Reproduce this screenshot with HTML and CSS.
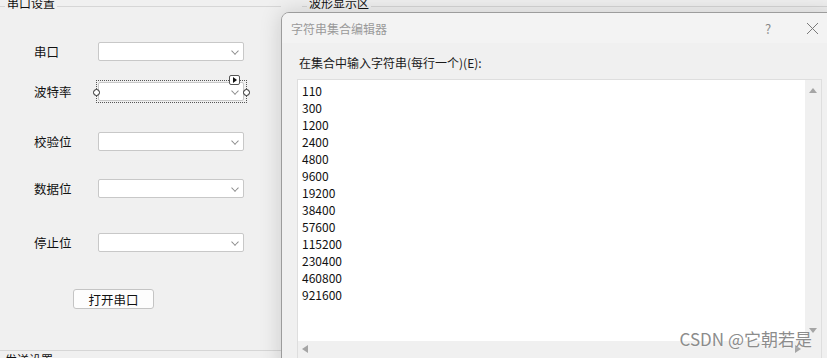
FILE: index.html
```html
<!DOCTYPE html>
<html lang="zh-CN">
<head>
  <meta charset="UTF-8" />
  <title>串口助手 - 设计器</title>
  <link rel="stylesheet" href="styles.css">
</head>
<body>
  <!-- Form designer surface -->
  <div class="form-surface">
    <section class="port-group">
      <div class="group-title"><span>串口设置</span></div>

      <div class="field-row row-port">
        <label>串口</label>
        <div class="combo"><span class="chevron"></span></div>
      </div>

      <div class="field-row row-baud">
        <label>波特率</label>
        <div class="combo is-selected">
          <span class="chevron"></span>
          <span class="sel-frame"></span>
          <span class="sel-handle left"></span>
          <span class="sel-handle right"></span>
          <span class="smart-tag"></span>
        </div>
      </div>

      <div class="field-row row-parity">
        <label>校验位</label>
        <div class="combo"><span class="chevron"></span></div>
      </div>

      <div class="field-row row-data">
        <label>数据位</label>
        <div class="combo"><span class="chevron"></span></div>
      </div>

      <div class="field-row row-stop">
        <label>停止位</label>
        <div class="combo"><span class="chevron"></span></div>
      </div>

      <div class="button-row">
        <button class="win-btn">打开串口</button>
      </div>
    </section>

    <section class="wave-group">
      <div class="group-title"><span>波形显示区</span></div>
    </section>

    <div class="send-title">发送设置</div>
  </div>

  <!-- String collection editor dialog -->
  <div class="dialog">
    <div class="dialog-titlebar">
      <span class="dialog-title">字符串集合编辑器</span>
      <span class="title-btn">?</span>
      <span class="title-btn close">
        <svg width="13" height="13" viewBox="0 0 13 13"><path d="M1 1 L12 12 M12 1 L1 12" stroke="#7a7a7a" stroke-width="1" fill="none"/></svg>
      </span>
    </div>

    <div class="dialog-body">
      <p class="prompt">在集合中输入字符串(每行一个)(E):</p>
      <div class="list-box">
        <div class="list-text">
          <div>110</div>
          <div>300</div>
          <div>1200</div>
          <div>2400</div>
          <div>4800</div>
          <div>9600</div>
          <div>19200</div>
          <div>38400</div>
          <div>57600</div>
          <div>115200</div>
          <div>230400</div>
          <div>460800</div>
          <div>921600</div>
        </div>
        <div class="vscroll">
          <span class="arrow up"></span>
          <span class="arrow down"></span>
        </div>
        <div class="hscroll">
          <span class="arrow left"></span>
          <span class="arrow right"></span>
        </div>
        <div class="corner"></div>
      </div>
    </div>
  </div>

  <div class="watermark">CSDN @它朝若是</div>
</body>
</html>
```

FILE: styles.css
```css
* {
  margin: 0;
  padding: 0;
  box-sizing: border-box;
  font-family: "Noto Sans CJK SC", "Noto Sans", sans-serif;
}

body {
  width: 827px;
  height: 358px;
  overflow: hidden;
  position: relative;
  background-color: #f0f0f0;
  color: #111;
  font-size: 12px;
}

.form-surface {
  display: flex;
  height: 358px;
  position: relative;
}

/* group boxes */
.port-group {
  width: 281px;
  height: 351px;
  border-bottom: 1px solid #d6d6d6;
  flex-shrink: 0;
}

.group-title {
  display: flex;
  gap: 2px;
  height: 12px;
  margin-top: -3px;
  line-height: 12px;
  white-space: nowrap;
}

.group-title::before,
.group-title::after {
  content: '';
  height: 1px;
  margin-top: 9px;
  background-color: #d6d6d6;
}

.group-title::before {
  width: 5px;
}

.group-title::after {
  flex: 1;
}

.wave-group {
  flex: 1;
  margin-left: 21px;
}

.send-title {
  position: absolute;
  left: 5px;
  top: 354px;
  line-height: 12px;
}

/* fields */
.field-row {
  display: flex;
  align-items: center;
  padding-left: 34px;
  height: 19px;
}

.field-row label {
  width: 64px;
  line-height: 19px;
  font-size: 12.5px;
}

.row-port { margin-top: 33px; }
.row-baud { margin-top: 21px; }
.row-parity { margin-top: 31px; }
.row-data { margin-top: 28px; }
.row-stop { margin-top: 35px; }

.combo {
  position: relative;
  width: 146px;
  height: 19px;
  background-color: #fff;
  border: 1px solid #c8c8c8;
  border-radius: 2px;
}

.chevron {
  position: absolute;
  right: 5px;
  top: 6px;
  width: 6px;
  height: 6px;
  border-right: 1px solid #8a8a8a;
  border-bottom: 1px solid #8a8a8a;
  transform: translateY(-1px) rotate(45deg) scale(0.9, 0.9);
}

/* designer selection */
.sel-frame {
  position: absolute;
  left: -3px;
  right: -4px;
  top: -3px;
  bottom: -3px;
  border: 1px dotted #555;
}

.sel-handle {
  position: absolute;
  top: 6px;
  width: 7px;
  height: 7px;
  border: 1px solid #222;
  border-radius: 50%;
  background-color: #fff;
}

.sel-handle.left { left: -6px; }
.sel-handle.right { right: -7px; }

.smart-tag {
  position: absolute;
  right: 3px;
  top: -8px;
  width: 11px;
  height: 10px;
  border: 1px solid #555;
  border-radius: 2px;
  background-color: #fff;
}

.smart-tag::after {
  content: '';
  position: absolute;
  left: 3px;
  top: 1px;
  border-left: 4px solid #111;
  border-top: 3px solid transparent;
  border-bottom: 3px solid transparent;
}

.button-row {
  margin-top: 37px;
  padding-left: 73px;
}

.win-btn {
  width: 81px;
  height: 20px;
  background-color: #fdfdfd;
  border: 1px solid #c4c4c4;
  border-radius: 3px;
  font-size: 12.5px;
  color: #111;
}

/* dialog */
.dialog {
  position: absolute;
  left: 281px;
  top: 12px;
  width: 554px;
  height: 360px;
  background-color: #f0f0f0;
  border: 1px solid #9c9c9c;
  border-radius: 8px 0 0 0;
  box-shadow: 0 0 22px rgba(0, 0, 0, 0.16);
  overflow: hidden;
}

.dialog-titlebar {
  display: flex;
  align-items: center;
  height: 30px;
  padding-left: 9px;
  background-color: #f3f3f3;
}

.dialog-title {
  flex: 1;
  color: #9a9a9a;
}

.title-btn {
  width: 44px;
  display: flex;
  justify-content: center;
  align-items: center;
  color: #888;
  font-size: 13px;
}

.dialog-body {
  padding: 12px 0 0 15px;
}

.prompt {
  line-height: 16px;
  padding-left: 2px;
  color: #1a1a1a;
}

.list-box {
  margin-top: 8px;
  width: 525px;
  height: 280px;
  border: 1px solid #dedede;
  display: grid;
  grid-template-columns: 1fr 16px;
  grid-template-rows: 1fr 17px;
}

.list-text {
  background-color: #fff;
  padding: 2px 4px;
  line-height: 17px;
  color: #111;
}

.vscroll,
.hscroll,
.corner {
  position: relative;
  background-color: #f0f0f0;
}

.arrow {
  position: absolute;
  width: 0;
  height: 0;
}

.arrow.up {
  left: 4px;
  top: 8px;
  border-bottom: 5px solid #a5a5a5;
  border-left: 4px solid transparent;
  border-right: 4px solid transparent;
}

.arrow.down {
  left: 4px;
  bottom: 8px;
  border-top: 5px solid #a5a5a5;
  border-left: 4px solid transparent;
  border-right: 4px solid transparent;
}

.arrow.left {
  left: 4px;
  top: 4px;
  border-right: 6px solid #a5a5a5;
  border-top: 4px solid transparent;
  border-bottom: 4px solid transparent;
}

.arrow.right {
  right: 4px;
  top: 4px;
  border-left: 6px solid #a5a5a5;
  border-top: 4px solid transparent;
  border-bottom: 4px solid transparent;
}

.watermark {
  position: absolute;
  right: 15px;
  top: 329px;
  font-size: 17px;
  line-height: 20px;
  color: #8c8c8c;
  text-shadow: 0 0 2px #fff;
}
```
